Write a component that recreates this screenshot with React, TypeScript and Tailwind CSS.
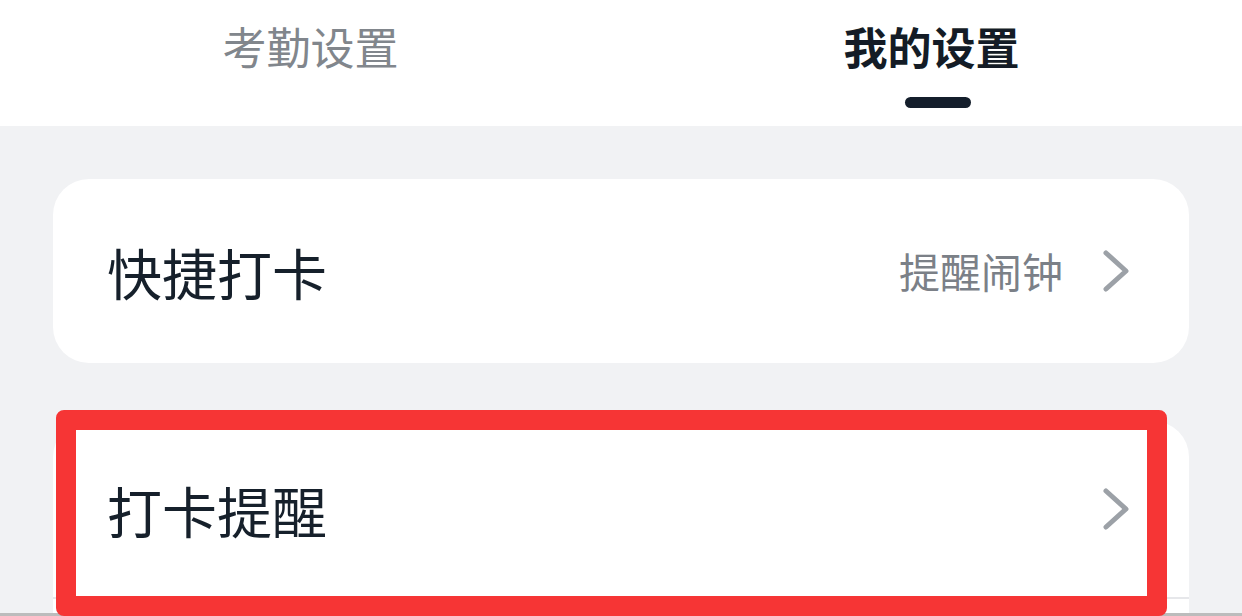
import React from 'react';

const FONT = "font-['Noto_Sans_CJK_SC','Noto_Sans',sans-serif]";

function Chevron() {
  return (
    <svg width="30" height="44" viewBox="0 0 30 44" fill="none" className="shrink-0">
      <path d="M5 4 L25 22 L5 40" stroke="#9ca1a7" strokeWidth="5" strokeLinecap="round" strokeLinejoin="round" />
    </svg>
  );
}

export default function App() {
  return (
    <div className={`${FONT} relative w-[1242px] h-[616px] overflow-hidden bg-[#f1f2f4]`}>
      {/* Tabs */}
      <div className="h-[126px] bg-white flex">
        <div className="flex-1 flex flex-col items-center">
          <span className="mt-[16px] text-[44px] leading-[60px] text-[#81868c]">考勤设置</span>
        </div>
        <div className="flex-1 flex flex-col items-center">
          <span className="mt-[16px] text-[44px] leading-[60px] font-bold text-[#141c26]">我的设置</span>
          <div className="mt-[21px] ml-[12px] w-[66px] h-[11px] rounded-full bg-[#141e2b]" />
        </div>
      </div>

      <div className="px-[53px] pt-[53px] flex flex-col gap-[58px]">
        {/* Card 1 */}
        <div className="h-[184px] bg-white rounded-[36px] flex items-center pl-[54px] pr-[58px]">
          <span className="flex-1 text-[55px] text-[#16202b]">快捷打卡</span>
          <span className="text-[41px] text-[#7b8087] mr-[38px]">提醒闹钟</span>
          <Chevron />
        </div>

        {/* Card 2 */}
        <div className="bg-white rounded-t-[36px]">
          <div className="h-[178px] flex items-center pl-[54px] pr-[58px] border-b-2 border-[#e6e7ea]">
            <span className="flex-1 text-[55px] text-[#16202b]">打卡提醒</span>
            <Chevron />
          </div>
          <div className="h-[40px]" />
        </div>
      </div>

      {/* bottom edge line */}
      <div className="absolute left-0 right-0 bottom-0 h-[3px] bg-[#bcbcbc]" />

      {/* Red highlight annotation */}
      <div className="absolute left-[56px] top-[410px] w-[1111px] h-[206px] border-[20px] border-[#f63535] rounded-[8px]" />
    </div>
  );
}
